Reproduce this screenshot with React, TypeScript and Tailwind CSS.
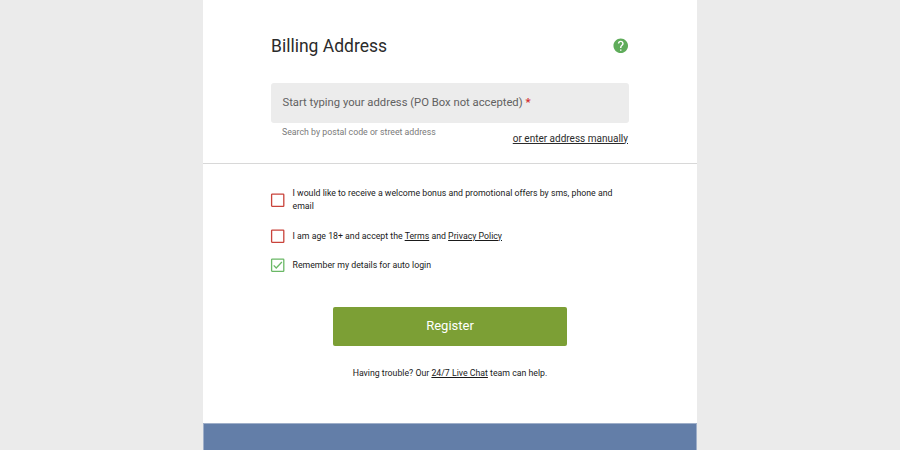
import { useState } from 'react'

interface OptionProps {
    checked: boolean
    onToggle: () => void
    children: React.ReactNode
}

function Option({ checked, onToggle, children }: OptionProps) {
    return (
        <div className="flex items-center gap-2">
            <button
                type="button"
                role="checkbox"
                aria-checked={checked}
                onClick={onToggle}
                className="w-[13px] h-[13px] shrink-0"
            >
                <svg viewBox="0 0 13 13" className="block w-[13px] h-[13px] overflow-visible" fill="none" stroke={checked ? '#6ab866' : '#c9433b'}>
                    <rect x="0.6" y="0.1" width="12.2" height="12.2" rx="0.6" strokeWidth="1.3" />
                    {checked && <path d="M2.7 6.4 5.2 9 10.9 3" strokeWidth="1.3" />}
                </svg>
            </button>
            <p className="pl-[0.5px] text-[8.75px] leading-[13px] text-[#1a1a1a]">{children}</p>
        </div>
    )
}

export default function App() {
    const [offers, setOffers] = useState(false)
    const [terms, setTerms] = useState(false)
    const [remember, setRemember] = useState(true)

    return (
        <div className="h-[450px] bg-[#ebebeb] flex justify-center overflow-hidden font-['Roboto',sans-serif]">
            <main className="w-[494px] bg-white flex flex-col">
                <section className="h-[164px] border-b border-[#d8d8d8] px-[68px] pt-[34px]">
                    <div className="flex items-center justify-between h-6">
                        <h1 className="text-[17.5px] text-[#2b2b2b]">Billing Address</h1>
                        <svg viewBox="0 0 24 24" className="w-[17.5px] h-[17.5px]" fill="#5fac5a">
                            <path d="M12 2C6.48 2 2 6.48 2 12s4.48 10 10 10 10-4.48 10-10S17.52 2 12 2zm1 17h-2v-2h2v2zm2.07-7.75l-.9.92C13.45 12.9 13 13.5 13 15h-2v-.5c0-1.1.45-2.1 1.17-2.83l1.24-1.26c.37-.36.59-.86.59-1.41 0-1.1-.9-2-2-2s-2 .9-2 2H8c0-2.21 1.79-4 4-4s4 1.79 4 4c0 .88-.36 1.68-.93 2.25z" />
                        </svg>
                    </div>
                    <div className="mt-[24.5px] h-10 bg-[#ececec] rounded-[3px] pl-[11.5px] pt-px flex items-center text-[11.25px] text-[#616161]">
                        Start typing your address (PO Box not accepted)&nbsp;<span className="font-bold text-[#d32f2f]">*</span>
                    </div>
                    <div className="flex justify-between pl-[11px] pr-px">
                        <span className="mt-[2.5px] text-[8.75px] leading-[14px] text-[#7a7a7a]">Search by postal code or street address</span>
                        <a className="mt-[9px] text-[10px] leading-[14px] text-[#2b2b2b] underline">or enter address manually</a>
                    </div>
                </section>

                <section className="px-[68px] pt-[23px] flex flex-col">
                    <Option checked={offers} onToggle={() => setOffers(!offers)}>
                        I would like to receive a welcome bonus and promotional offers by sms, phone and email
                    </Option>
                    <div className="mt-[16.5px]">
                        <Option checked={terms} onToggle={() => setTerms(!terms)}>
                            I am age 18+ and accept the <a className="underline">Terms</a> and <a className="underline">Privacy Policy</a>
                        </Option>
                    </div>
                    <div className="mt-4">
                        <Option checked={remember} onToggle={() => setRemember(!remember)}>
                            Remember my details for auto login
                        </Option>
                    </div>
                    <button className="mt-[35.3px] w-[234px] h-[39px] pb-px self-center bg-[#7c9f35] text-white text-[13px] rounded-[2px]">
                        Register
                    </button>
                    <p className="mt-[21px] text-center text-[8.75px] leading-[13px] text-[#1a1a1a]">
                        Having trouble? Our <a className="underline">24/7 Live Chat</a> team can help.
                    </p>
                </section>

                <footer className="mt-auto h-[27px] bg-[#637ea8] border-x border-t border-[#9fafc9]" />
            </main>
        </div>
    )
}
